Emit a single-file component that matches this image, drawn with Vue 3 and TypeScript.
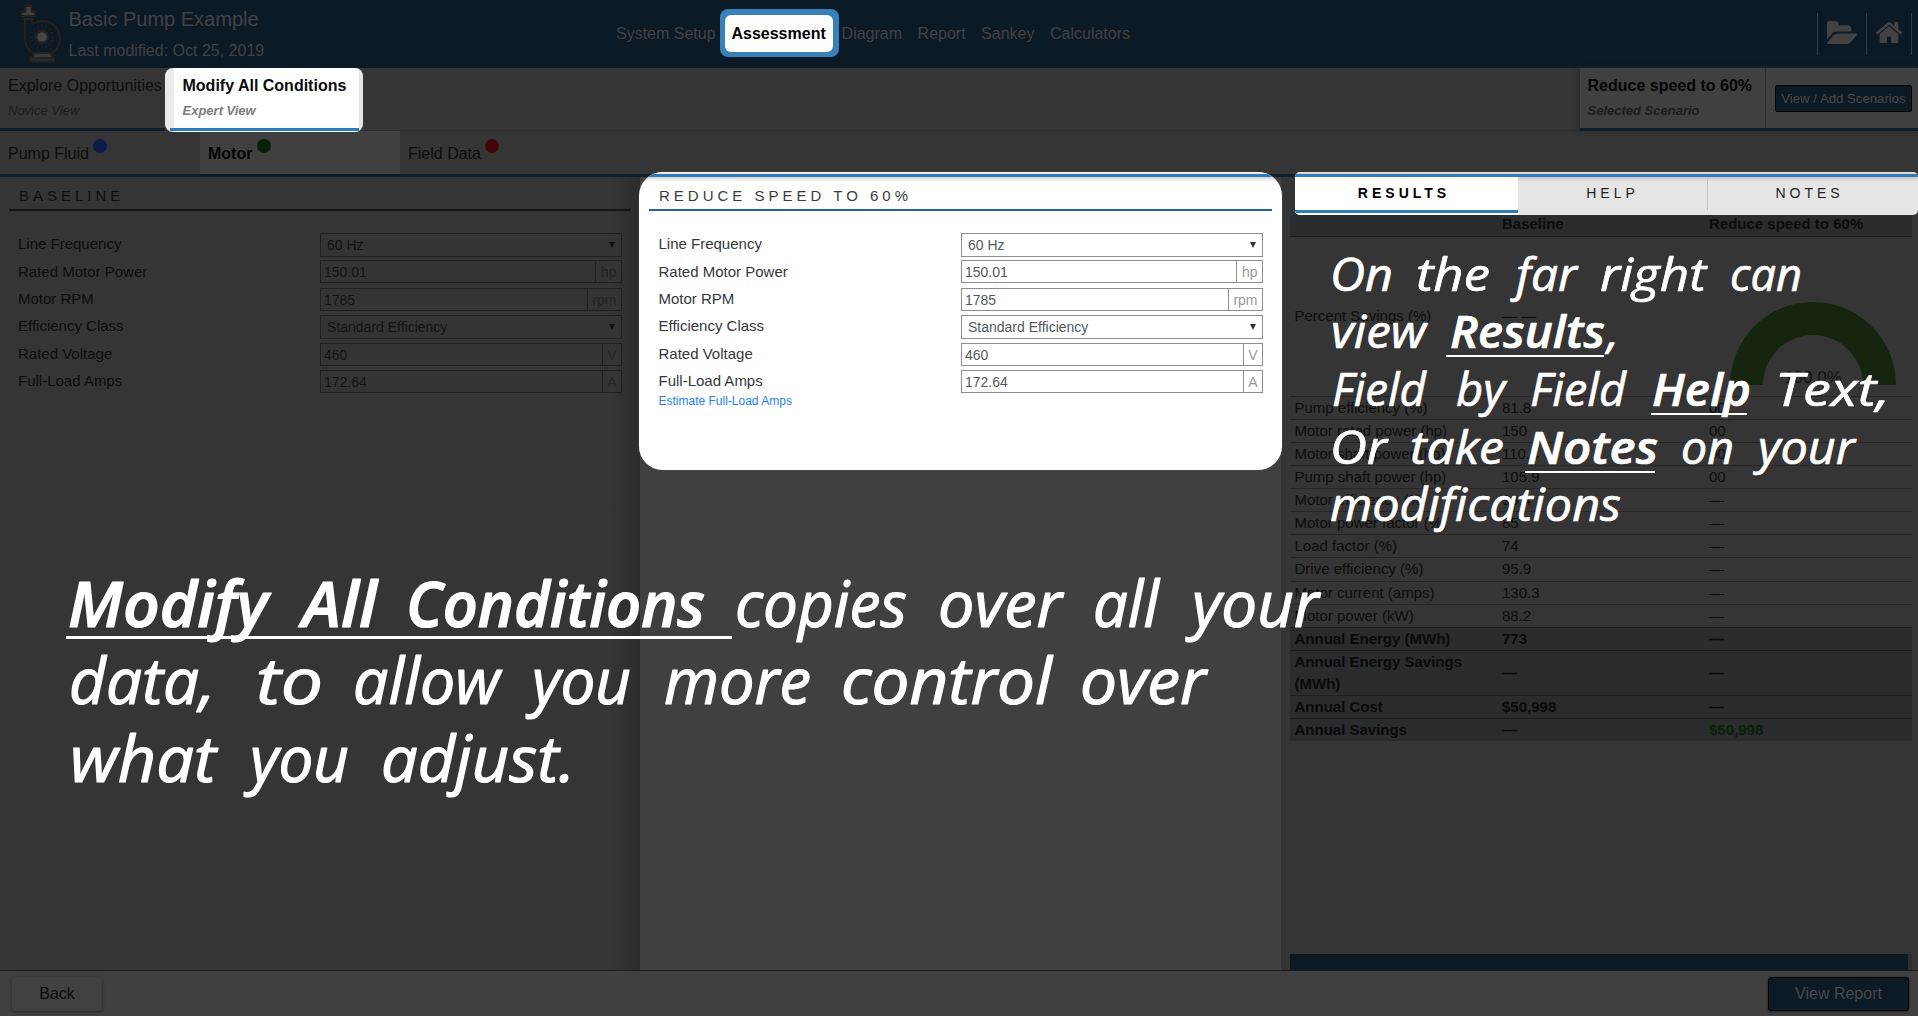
<script setup lang="ts">
interface Field { label: string; value: string; unit?: string }
interface Row { label: string; a: string; b: string }
interface Word { t: string; x: number; y: number; w: number; b?: boolean }

const nav: string[] = ['System Setup', 'Assessment', 'Diagram', 'Report', 'Sankey', 'Calculators']
const tabs = [
  { name: 'Pump Fluid', dot: 'blue' },
  { name: 'Motor', dot: 'green' },
  { name: 'Field Data', dot: 'red' },
]
const fields: Field[] = [
  { label: 'Line Frequency', value: '60 Hz' },
  { label: 'Rated Motor Power', value: '150.01', unit: 'hp' },
  { label: 'Motor RPM', value: '1785', unit: 'rpm' },
  { label: 'Efficiency Class', value: 'Standard Efficiency' },
  { label: 'Rated Voltage', value: '460', unit: 'V' },
  { label: 'Full-Load Amps', value: '172.64', unit: 'A' },
]
const rows: Row[] = [
  { label: 'Pump efficiency (%)', a: '81.8', b: '00' },
  { label: 'Motor rated power (hp)', a: '150', b: '00' },
  { label: 'Motor shaft power (hp)', a: '110.4', b: '00' },
  { label: 'Pump shaft power (hp)', a: '105.9', b: '00' },
  { label: 'Motor efficiency (%)', a: '93.4', b: '—' },
  { label: 'Motor power factor (%)', a: '85', b: '—' },
  { label: 'Load factor (%)', a: '74', b: '—' },
  { label: 'Drive efficiency (%)', a: '95.9', b: '—' },
  { label: 'Motor current (amps)', a: '130.3', b: '—' },
  { label: 'Motor power (kW)', a: '88.2', b: '—' },
]
const totals: Row[] = [
  { label: 'Annual Energy (MWh)', a: '773', b: '—' },
  { label: 'Annual Energy Savings (MWh)', a: '—', b: '—' },
  { label: 'Annual Cost', a: '$50,998', b: '—' },
  { label: 'Annual Savings', a: '—', b: '$50,998' },
]
const mainNote: Word[] = [
  { t: 'Modify', x: 68, y: 627, w: 200, b: true },
  { t: 'All', x: 302, y: 627, w: 75, b: true },
  { t: 'Conditions', x: 406, y: 627, w: 299, b: true },
  { t: 'copies', x: 735, y: 627, w: 172 },
  { t: 'over', x: 938, y: 627, w: 124 },
  { t: 'all', x: 1093, y: 627, w: 66 },
  { t: 'your', x: 1192, y: 627, w: 127 },
  { t: 'data,', x: 69, y: 704, w: 146 },
  { t: 'to', x: 256, y: 704, w: 67 },
  { t: 'allow', x: 353, y: 704, w: 147 },
  { t: 'you', x: 532, y: 704, w: 99 },
  { t: 'more', x: 664, y: 704, w: 147 },
  { t: 'control', x: 841, y: 704, w: 211 },
  { t: 'over', x: 1080, y: 704, w: 126 },
  { t: 'what', x: 70, y: 782, w: 146 },
  { t: 'you', x: 250, y: 782, w: 99 },
  { t: 'adjust.', x: 381, y: 782, w: 194 },
]
const sideNote: Word[] = [
  { t: 'On', x: 1330, y: 291, w: 63 },
  { t: 'the', x: 1416, y: 291, w: 74 },
  { t: 'far', x: 1516, y: 291, w: 61 },
  { t: 'right', x: 1600, y: 291, w: 106 },
  { t: 'can', x: 1730, y: 291, w: 72 },
  { t: 'view', x: 1331, y: 348, w: 95 },
  { t: 'Results', x: 1450, y: 348, w: 155, b: true },
  { t: ',', x: 1607, y: 348, w: 12 },
  { t: 'Field', x: 1332, y: 406, w: 94 },
  { t: 'by', x: 1456, y: 406, w: 49 },
  { t: 'Field', x: 1530, y: 406, w: 96 },
  { t: 'Help', x: 1652, y: 406, w: 99, b: true },
  { t: 'Text,', x: 1775, y: 406, w: 115 },
  { t: 'Or', x: 1330, y: 464, w: 57 },
  { t: 'take', x: 1410, y: 464, w: 94 },
  { t: 'Notes', x: 1527, y: 464, w: 131, b: true },
  { t: 'on', x: 1681, y: 464, w: 53 },
  { t: 'your', x: 1758, y: 464, w: 97 },
  { t: 'modifications', x: 1330, y: 521, w: 291 },
]
const spokes: number[] = Array.from({ length: 16 }, (_, i) => i * 22.5)
</script>

<template>
  <div class="app">
    <header class="top">
      <svg class="pump" width="42" height="60" viewBox="0 0 42 60">
        <g fill="none" stroke="#242322" stroke-width="1.8" stroke-linejoin="round">
          <path d="M5 15V34A17.5 17.5 0 1 0 22 17C18 17 15 18 12 20V15" />
          <circle cx="22" cy="33" r="6" />
          <path d="M5.500 2H11.500V8H15V12H1.500V8H5.500Z" fill="#404040" />
          <path d="M3 15H14" />
          <path d="M15 49H30L33 54H11Z" fill="#3a3a3a" />
          <path d="M10 54.500H34V57.500H10Z" fill="#303030" />
          <path v-for="a in spokes" :key="a" d="M22 20.500V24" stroke-width="1" :transform="`rotate(${a} 22 33)`" />
        </g>
        <circle cx="22" cy="33" r="4.800" fill="#454545" />
      </svg>
      <div class="title">
        <div class="name">Basic Pump Example</div>
        <div class="date">Last modified: Oct 25, 2019</div>
      </div>
      <nav>
        <div v-for="n in nav" :key="n" :class="['link', { current: n === 'Assessment' }]"><span>{{ n }}</span></div>
      </nav>
      <div class="icons">
        <div class="ico folder">
          <svg width="30" height="23" viewBox="0 128 1815 1408" preserveAspectRatio="none"><path fill="#424242" d="M1815 952q0 31-31 66l-336 396q-43 51-120.500 86.500t-143.500 35.500h-1088q-34 0-60.500-13t-26.500-43q0-31 31-66l336-396q43-51 120.500-86.500t143.500-35.500h1088q34 0 60.500 13t26.500 43zm-343-344v160h-832q-94 0-197 47.500t-164 119.500l-337 396-5 6q0-4-.5-12.500t-.5-12.500v-960q0-92 66-158t158-66h320q92 0 158 66t66 158v32h544q92 0 158 66t66 158z" /></svg>
        </div>
        <div class="ico home">
          <svg width="26" height="21" viewBox="90 253 1612 1283" preserveAspectRatio="none"><path fill="#424242" d="M1472 992v480q0 26-19 45t-45 19h-384v-384h-256v384h-384q-26 0-45-19t-19-45v-480q0-1 .5-3t.5-3l575-474 575 474q1 2 1 6zm223-69l-62 74q-8 9-21 11h-3q-13 0-21-7l-692-577-692 577q-12 8-24 7-13-2-21-11l-62-74q-8-10-7-23.500t11-21.500l719-599q32-26 76-26t76 26l244 204v-195q0-14 9-23t23-9h192q14 0 23 9t9 23v408l219 182q10 8 11 21.500t-7 23.500z" /></svg>
        </div>
      </div>
    </header>

    <div class="modes">
      <div class="mode novice">
        <div>Explore Opportunities</div>
        <em>Novice View</em>
      </div>
      <div class="spot">
        <div class="mode expert">
          <div>Modify All Conditions</div>
          <em>Expert View</em>
        </div>
      </div>
      <div class="grow"></div>
      <div class="scenario">
        <div class="mode picked">
          <div>Reduce speed to 60%</div>
          <em>Selected Scenario</em>
        </div>
        <div class="addbox"><button class="add">View / Add Scenarios</button></div>
      </div>
    </div>

    <div class="tabs">
      <div v-for="t in tabs" :key="t.name" :class="['tab', { on: t.name === 'Motor' }]">
        <span>{{ t.name }}</span><i :class="t.dot"></i>
      </div>
    </div>

    <main>
      <section class="col base">
        <h2>BASELINE</h2>
        <div class="form">
          <div v-for="f in fields" :key="f.label" class="row">
            <label>{{ f.label }}</label>
            <div :class="['box', { select: !f.unit }]">
              <span class="val">{{ f.value }}</span>
              <span v-if="f.unit" class="unit">{{ f.unit }}</span>
              <b v-else class="caret"></b>
            </div>
          </div>
        </div>
      </section>

      <section class="col mod">
        <div class="card">
          <div class="rule"></div>
          <h2>REDUCE SPEED TO 60%</h2>
          <div class="form">
            <div v-for="f in fields" :key="f.label" class="row">
              <label>{{ f.label }}</label>
              <div :class="['box', { select: !f.unit }]">
                <span class="val">{{ f.value }}</span>
                <span v-if="f.unit" class="unit">{{ f.unit }}</span>
                <b v-else class="caret"></b>
              </div>
            </div>
          </div>
          <a>Estimate Full-Load Amps</a>
        </div>
      </section>

      <section class="col side">
        <div class="strip">
          <div class="rule"></div>
          <div class="heads">
            <div class="head active">RESULTS</div>
            <div class="head help">HELP</div>
            <div class="head notes">NOTES</div>
          </div>
        </div>
        <div class="table">
          <div class="tr th"><span></span><span>Baseline</span><span>Reduce speed to 60%</span></div>
          <div class="tr savings">
            <span>Percent Savings (%)</span><span>— —</span>
            <svg width="180" height="90" viewBox="0 0 180 90">
              <path d="M7 85A83 83 0 0 1 173 85H140A50 50 0 0 0 40 85Z" fill="#16250f" />
              <text x="90" y="83" text-anchor="middle" font-size="17" fill="#111">100.0%</text>
            </svg>
          </div>
          <div v-for="r in rows" :key="r.label" class="tr"><span>{{ r.label }}</span><span>{{ r.a }}</span><span>{{ r.b }}</span></div>
          <div v-for="r in totals" :key="r.label" class="tr total"><span>{{ r.label }}</span><span>{{ r.a }}</span><span :class="{ gain: r.b !== '—' }">{{ r.b }}</span></div>
        </div>
        <div class="grow"></div>
        <div class="bar"></div>
      </section>
    </main>

    <footer>
      <button class="back">Back</button>
      <button class="report">View Report</button>
    </footer>

    <svg class="notes-layer" width="1918" height="1016" viewBox="0 0 1918 1016">
      <g font-size="64" stroke-width="1.2">
        <text v-for="(w, i) in mainNote" :key="i" :x="w.x" :y="w.y" :textLength="w.w" lengthAdjust="spacingAndGlyphs" :class="{ strong: w.b }">{{ w.t }}</text>
      </g>
      <g font-size="46" stroke-width=".7">
        <text v-for="(w, i) in sideNote" :key="i" :x="w.x" :y="w.y" :textLength="w.w" lengthAdjust="spacingAndGlyphs" :class="{ strong: w.b }">{{ w.t }}</text>
      </g>
      <rect x="66" y="636" width="666" height="3" />
      <rect x="1446" y="355" width="158" height="2" />
      <rect x="1651" y="413" width="96" height="2" />
      <rect x="1525" y="471" width="130" height="2" />
    </svg>
  </div>
</template>

<style>
body { background: #353535; overflow: hidden; }
</style>

<style scoped>
* { box-sizing: border-box; }
.app { position: relative; width: 1918px; height: 1016px; display: flex; flex-direction: column; overflow: hidden; background: #353535; color: #0d0d0d; font: 16px/24px "Liberation Sans", Arial, sans-serif; }
.grow { flex: 1; }
button { font-family: inherit; padding: 0; }
.top { height: 68px; flex: none; display: flex; background: #0c1a26; color: #424242; }
.pump { margin: 4px 0 0 20px; }
.title { width: 547px; padding: 4px 0 0 6.500px; }
.name { font-size: 20px; line-height: 30px; }
.date { line-height: 24px; margin-top: 5px; }
nav { display: flex; align-items: flex-start; padding-top: 9px; margin-left: -1px; }
.link { padding: 13px 8px 0; height: 48px; white-space: nowrap; }
.current { padding: 6px 6px 5px 5px; margin: 0 -5px 0 -4px; background: #3780b9; border-radius: 8px; color: #000; font-weight: bold; width: 119px; }
.current span { display: block; height: 37px; line-height: 24px; padding-top: 7px; border-radius: 6px; background: #fff; text-align: center; }
.link:nth-child(n+4) { margin-left: -.500px; }
.icons { margin-left: auto; display: flex; margin-top: 13px; margin-right: 6px; height: 42px; border-right: 1px solid #3a3d3f; }
.ico { border-left: 1px solid #3a3d3f; }
.ico svg { display: block; }
.folder { width: 49px; padding: 8px 0 0 9px; }
.home { width: 45px; padding: 9px 0 0 9px; }

.modes { height: 63px; flex: none; display: flex; align-items: flex-start; position: relative; z-index: 2; box-shadow: inset 0 -1px #2e2e2e; }
.mode { padding: 6px 0 0 8px; height: 63px; border-bottom: 3px solid #0c1d2b; white-space: nowrap; }
.mode em { display: block; font-size: 13px; line-height: 20px; margin-top: 3px; color: #1d1d1d; }
.novice { width: 165px; }
.spot { width: 198px; height: 64px; padding: 0 4px 1px 5px; border-radius: 8px; overflow: hidden; background: linear-gradient(90deg, #ebebeb 9px, #fff 9px, #fff 194px, #e5e5e5 194px); }
.expert { padding-left: 12.500px; border-color: #2f7ab8; font-weight: bold; color: #0a0a0a; }
.expert em, .picked em { font-weight: bold; }
.mode.expert em { color: #7c7c7c; }
.scenario { width: 338px; display: flex; background: #404040; border-bottom: 3px solid #0c1d2b; height: 63px; box-shadow: -2px 0 4px #2c2c2c; }
.picked { width: 186px; border-bottom: 0; height: 60px; border-right: 1px solid #2e2e2e; font-weight: bold; color: #050505; padding-left: 7.500px; }
.addbox { padding: 17px 0 0 9px; }
.add { width: 137px; height: 27px; border: 1px solid #000; border-radius: 2px; background: #0c1a26; color: #484848; font-size: 13.200px; }

.tabs { height: 46px; flex: none; display: flex; border-bottom: 3px solid #0c1d2b; }
.tab { width: 200px; padding: 11px 0 0 8px; display: flex; }
.tab i { width: 14px; height: 14px; border-radius: 50%; margin: -3px 0 0 4.500px; }
.on { background: #404040; font-weight: bold; color: #050505; }
.blue { background: #0d1b4c; }
.green { background: #081f08; }
.red { background: #400606; }

main { height: 793px; flex: none; display: flex; }
.col { display: flex; flex-direction: column; }
.base { width: 640px; padding: 0 9px; background: linear-gradient(90deg, #353535 610px, #2c2c2c 640px); }
h2 { margin: 0; height: 34px; border-bottom: 2px solid #141616; padding: 7px 0 0 10px; font-size: 15px; line-height: 24px; letter-spacing: 4px; font-weight: normal; color: #101010; }
.form { padding: 22px 9px 0 9px; }
.row { height: 27.400px; display: flex; justify-content: space-between; }
label { font-size: 15px; line-height: 22px; }
.row:nth-child(2) label { line-height: 23px; }
.box { width: 302px; height: 23px; border: 1px solid #1f2223; background: #333436; display: flex; font-size: 14px; line-height: 23.500px; color: #121416; }
.select { height: 24px; line-height: 23px; }
.val { flex: 1; padding-left: 3px; }
.select .val { padding-left: 6px; }
.unit { padding: 0 4.500px; border-left: 1px solid #1f2223; line-height: 22px; color: #222426; }
.caret { width: 0; height: 0; margin: 8px 6px 0 0; border: 3px solid transparent; border-top: 6px solid #0f1011; border-bottom: 0; }
.mod { width: 641px; background: #404040; z-index: 1; }
.card { width: 643px; height: 298px; margin: -5px 0 0 -1px; border-radius: 24px; background: #fff; overflow: hidden; box-shadow: 0 0 1px #999; padding: 2px 10px 0; }
.rule { height: 3px; background: #2f7ab8; margin: 0 -10px; box-shadow: 0 1px 4px #aaa; }
.card h2 { border-color: #246496; color: #3a3d40; }
.card label { color: #35383b; }
.card .box { background: #fff; border-color: #8d8d8d; color: #54585c; }
.card .unit { border-color: #8d8d8d; color: #999; }
.card .caret { border-top-color: #333; }
.card .form { padding-left: 9.500px; padding-right: 9px; }
a { display: block; margin: -5px 0 0 9.500px; font-size: 12px; line-height: 18px; color: #2680fb; }

.side { width: 637px; padding-left: 9px; }
.strip { width: 623px; height: 43px; margin: -5px 0 0 5px; padding-top: 2px; border-radius: 5px; overflow: hidden; background: #e5e5e5; flex: none; }
.strip .rule { margin: 0; }
.heads { display: flex; height: 38px; }
.head { height: 33px; border-right: 1px solid #c3c3c3; font-size: 14px; line-height: 33px; letter-spacing: 4px; text-align: center; color: #222; }
.active { width: 223px; height: 36px; border-right: 0; background: #fff; border-bottom: 3px solid #2f7ab8; font-weight: bold; color: #000; box-shadow: 0 2px #fff; padding-right: 5px; }
.help { width: 190px; }
.notes { width: 204px; border: 0; padding-right: 1px; }
.table { width: 622px; font-size: 15px; line-height: 22px; }
.tr { min-height: 23.070px; display: flex; align-items: center; border-top: 1px solid #262626; }
.tr span { width: 207px; padding-left: 4.500px; }
.tr span:first-child { width: 207.500px; padding-left: 4.500px; }
.th { height: 21px; min-height: 0; border: 0; padding-bottom: 3px; background: #2b2c2e; font-weight: bold; color: #0c0c0c; }
.savings { height: 160px; border-top-color: #1d1d1d; padding-bottom: 1px; }
.savings svg { margin: 0 0 5px 18px; align-self: flex-end; height: 90px; }
.total { background: #2b2c2e; border-color: #1d1e1f; font-weight: bold; color: #0a0a0a; }
.total span:first-child { padding-right: 30px; }
.total .gain { color: #0a220a; }
.bar { height: 16px; width: 618px; background: #0c1a26; box-shadow: 4px 0 #2e2e2e; }

footer { height: 46px; flex: none; display: flex; justify-content: space-between; padding: 6px 9px 0 12px; background: #404040; border-top: 1px solid #1b1b1b; position: relative; z-index: 2; }
footer button { height: 34px; font-size: 16px; border-radius: 3px; }
.back { width: 90px; border: 0; background: #414141; color: #0c0c0c; box-shadow: 0 1px 3px #282828; }
.report { width: 141px; border: 1px solid #000; background: #0c1a26; color: #484848; box-shadow: 0 1px 3px #222; }

.notes-layer { position: absolute; left: 0; top: 0; z-index: 5; fill: #fff; stroke: none; font-family: "Ink Free", "Segoe Print", "Open Sans", "Noto Sans", sans-serif; font-style: italic; }
.notes-layer text { stroke: #fff; stroke-linejoin: round; }
.notes-layer .strong { font-weight: 600; }
</style>
